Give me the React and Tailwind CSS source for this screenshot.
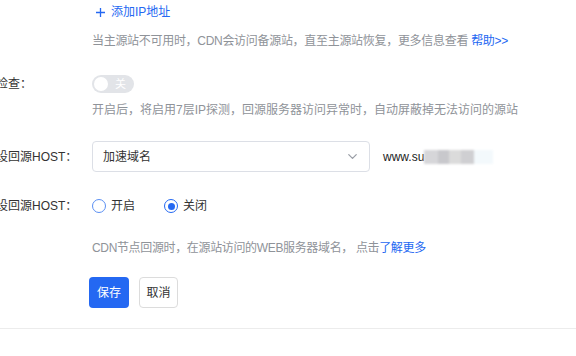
import { ChevronDown } from "lucide-react";

const Label = ({ children }) => (
  <div className="-ml-[28px] w-[120px] shrink-0 whitespace-nowrap text-[12px] text-[#333]">
    {children}
  </div>
);

const Help = ({ children, className = "" }) => (
  <div className={`ml-[92px] h-[16px] leading-[16px] text-[12px] text-[#8f9399] whitespace-nowrap ${className}`}>
    {children}
  </div>
);

const Radio = ({ checked, label }) => (
  <label className="flex items-center gap-[5px] text-[12px] text-[#333]">
    <span
      className={`w-[14px] h-[14px] rounded-full border flex items-center justify-center ${
        checked ? "border-[#2468f2]" : "border-[#5a8ff3]"
      }`}
    >
      {checked && <span className="w-[7px] h-[7px] rounded-full bg-[#2468f2]" />}
    </span>
    {label}
  </label>
);

export default function App() {
  return (
    <div className="w-[576px] h-[356px] bg-white overflow-hidden font-['Liberation_Sans','Noto_Sans_CJK_SC',sans-serif]">
      <div className="flex flex-col pt-[4px]">
        {/* add ip */}
        <div className="ml-[96px] h-[16px] flex items-center gap-[6px] text-[12px] text-[#2468f2]">
          <svg width="9" height="9" viewBox="0 0 9 9">
            <path d="M4.5 0v9M0 4.5h9" stroke="#2468f2" strokeWidth="1.3" />
          </svg>
          添加IP地址
        </div>

        <Help className="mt-[13px] tracking-[-0.3px]">
          当主源站不可用时，CDN会访问备源站，直至主源站恢复，更多信息查看{" "}
          <span className="text-[#2468f2]">帮助&gt;&gt;</span>
        </Help>

        {/* health check */}
        <div className="mt-[25px] h-[20px] flex items-center">
          <Label>健康检查：</Label>
          <div className="w-[42px] h-[18px] rounded-full bg-[#e2e4e8] flex items-center px-[2px] gap-[7px]">
            <span className="w-[14px] h-[14px] rounded-full bg-white" />
            <span className="text-[11px] leading-none text-white">关</span>
          </div>
        </div>

        <Help className="mt-[8px]">
          开启后，将启用7层IP探测，回源服务器访问异常时，自动屏蔽掉无法访问的源站
        </Help>

        {/* host select */}
        <div className="mt-[23px] h-[31px] flex items-center">
          <Label>指定设回源HOST：</Label>
          <div className="w-[278px] h-[31px] border border-[#dcdfe6] rounded-[4px] flex items-center justify-between pl-[10px] pr-[9px] text-[12px] text-[#333]">
            <span>加速域名</span>
            <ChevronDown size={15} strokeWidth={2} color="#9a9ea6" />
          </div>
          <div className="ml-[13px] flex items-center text-[12px] text-[#222]">
            <span>www.su</span>
            <div className="flex h-[14px] blur-[1px]">
              <span className="w-[14px] bg-[#d6d6d9]" />
              <span className="w-[11px] bg-[#c8c8cc]" />
              <span className="w-[12px] bg-[#dbdbdb]" />
              <span className="w-[13px] bg-[#cfcfd2]" />
              <span className="w-[19px] bg-[#f3f9fc]" />
            </div>
          </div>
        </div>

        {/* radio */}
        <div className="mt-[24px] h-[20px] flex items-center">
          <Label>强制设回源HOST：</Label>
          <div className="flex items-center gap-[29px]">
            <Radio label="开启" />
            <Radio checked label="关闭" />
          </div>
        </div>

        <Help className="mt-[24px] -ml-[2px] tracking-[-0.35px]">
          CDN节点回源时，在源站访问的WEB服务器域名， 点击
          <span className="text-[#2468f2]">了解更多</span>
        </Help>

        {/* buttons */}
        <div className="mt-[21px] ml-[89px] flex gap-[10px]">
          <button className="w-[40px] h-[31px] rounded-[4px] bg-[#2468f2] text-white text-[12px]">
            保存
          </button>
          <button className="w-[39px] h-[31px] rounded-[4px] border border-[#dcdcdc] bg-white text-[#333] text-[12px]">
            取消
          </button>
        </div>

        <div className="mt-[20px] border-t border-[#ececec]" />
      </div>
    </div>
  );
}
